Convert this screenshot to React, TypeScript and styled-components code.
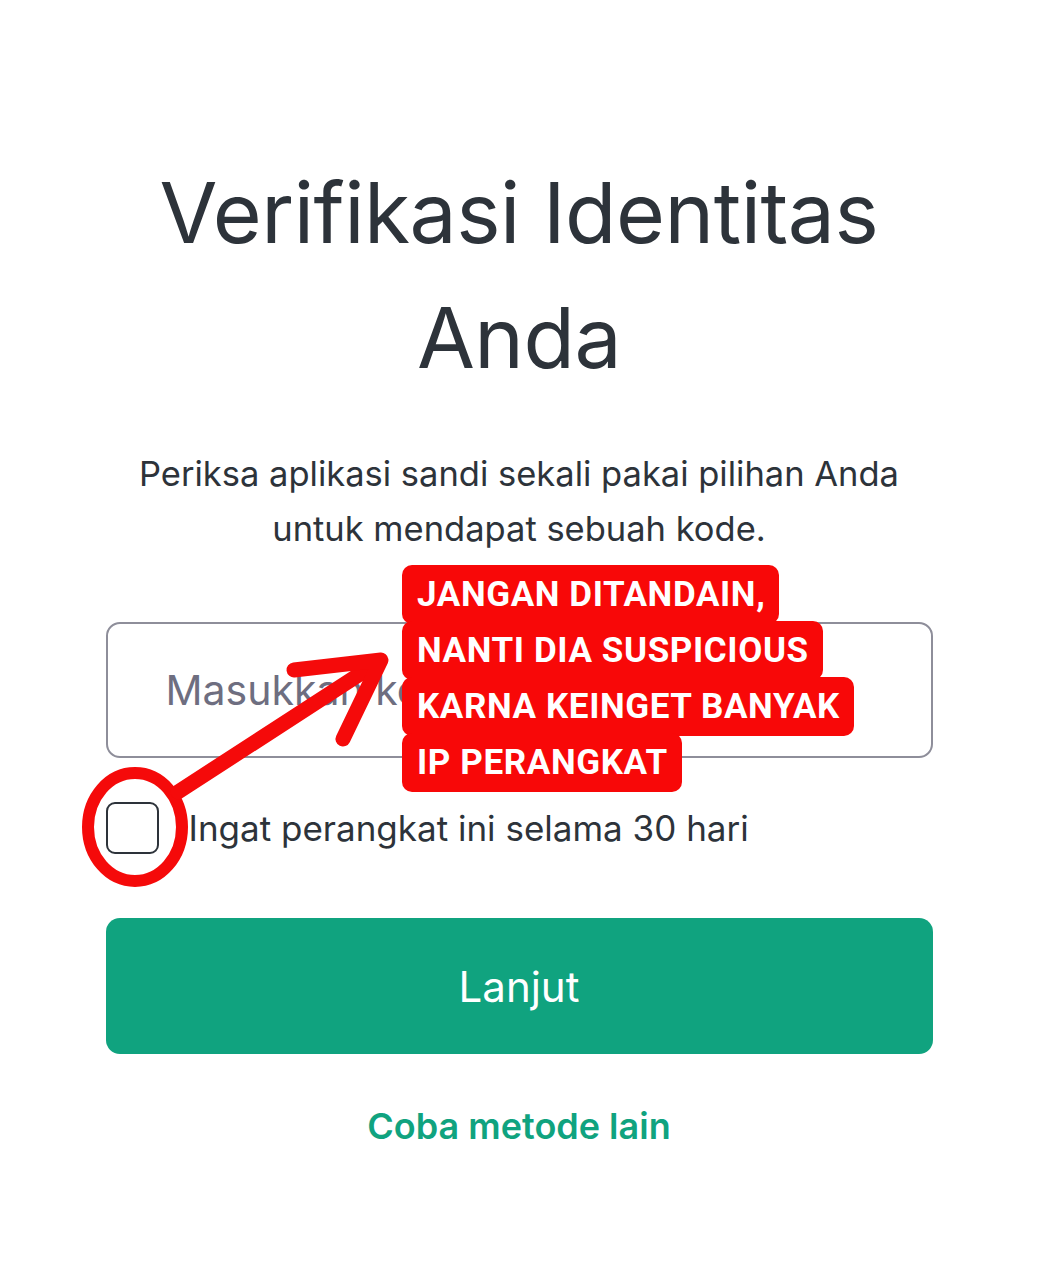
import React from 'react';
import styled, { createGlobalStyle } from 'styled-components';

const GlobalStyle = createGlobalStyle`
  html, body {
    margin: 0;
    padding: 0;
    background: #ffffff;
  }
  body {
    font-family: Inter, "Noto Sans", "Liberation Sans", sans-serif;
    color: #2d333a;
  }
`;

const Page = styled.div`
  position: relative;
  width: 1038px;
  height: 1280px;
  overflow: hidden;
  background: #ffffff;
`;

const Column = styled.main`
  width: 827px;
  margin: 0 auto;
  padding-top: 150px;
  display: flex;
  flex-direction: column;
  align-items: center;
`;

const Title = styled.h1`
  margin: 0;
  font-size: 84px;
  line-height: 125px;
  font-weight: 400;
  text-align: center;
  letter-spacing: -0.5px;
  color: #2d333a;
`;

const Subtitle = styled.p`
  margin: 46px 0 0;
  font-size: 34.5px;
  line-height: 55px;
  text-align: center;
  color: #2d333a;
`;

const CodeInput = styled.input`
  box-sizing: border-box;
  width: 100%;
  height: 136px;
  margin-top: 66px;
  padding: 0 58px;
  border: 2px solid #8e8e9a;
  border-radius: 14px;
  font-family: inherit;
  font-size: 41px;
  color: #2d333a;
  outline: none;

  &::placeholder {
    color: #6e6e80;
  }
`;

const RememberRow = styled.label`
  align-self: stretch;
  display: flex;
  align-items: center;
  gap: 30px;
  margin-top: 44px;
  font-size: 35px;
  color: #2d333a;
`;

const Box = styled.span`
  box-sizing: border-box;
  width: 53px;
  height: 52px;
  border: 2px solid #2d333a;
  border-radius: 9px;
  flex-shrink: 0;
`;

const ContinueButton = styled.button`
  box-sizing: border-box;
  width: 100%;
  height: 136px;
  margin-top: 64px;
  border: none;
  border-radius: 14px;
  background: #10a37f;
  color: #ffffff;
  font-family: inherit;
  font-size: 42px;
  font-weight: 400;
`;

const AltLink = styled.a`
  margin-top: 50px;
  font-size: 36px;
  font-weight: 600;
  color: #10a37f;
  text-decoration: none;
`;

// Sticker-style note: every line sits on its own red block
const Note = styled.div`
  position: absolute;
  left: 402px;
  top: 567px;
  font-family: Roboto, "Liberation Sans", sans-serif;
  font-weight: 700;
  font-size: 35px;
  line-height: 56px;
  letter-spacing: 0.6px;
  color: #ffffff;
`;

const NoteLine = styled.span`
  background: #f80808;
  padding: 9px 14px 9px 15px;
  border-radius: 10px;
  box-decoration-break: clone;
  -webkit-box-decoration-break: clone;
`;

const Markup = styled.svg`
  position: absolute;
  left: 0;
  top: 0;
  pointer-events: none;
`;

const noteLines = [
  'JANGAN DITANDAIN,',
  'NANTI DIA SUSPICIOUS',
  'KARNA KEINGET BANYAK',
  'IP PERANGKAT',
];

export default function App() {
  return (
    <Page>
      <GlobalStyle />
      <Column>
        <Title>
          Verifikasi Identitas
          <br />
          Anda
        </Title>
        <Subtitle>
          Periksa aplikasi sandi sekali pakai pilihan Anda
          <br />
          untuk mendapat sebuah kode.
        </Subtitle>
        <CodeInput placeholder="Masukkan kode" />
        <RememberRow>
          <Box />
          Ingat perangkat ini selama 30 hari
        </RememberRow>
        <ContinueButton>Lanjut</ContinueButton>
        <AltLink href="#">Coba metode lain</AltLink>
      </Column>

      <Markup width="1038" height="1280" viewBox="0 0 1038 1280">
        <ellipse cx="135" cy="827" rx="47" ry="54" fill="none" stroke="#f50a0a" strokeWidth="12" />
        <g stroke="#f50a0a" strokeWidth="15" strokeLinecap="round" strokeLinejoin="round" fill="none">
          <line x1="178" y1="792" x2="380" y2="661" />
          <polyline points="294,670 381,660 343,739" />
        </g>
      </Markup>

      <Note>
        {noteLines.map((line, i) => (
          <React.Fragment key={line}>
            <NoteLine>{line}</NoteLine>
            {i < noteLines.length - 1 && <br />}
          </React.Fragment>
        ))}
      </Note>
    </Page>
  );
}
